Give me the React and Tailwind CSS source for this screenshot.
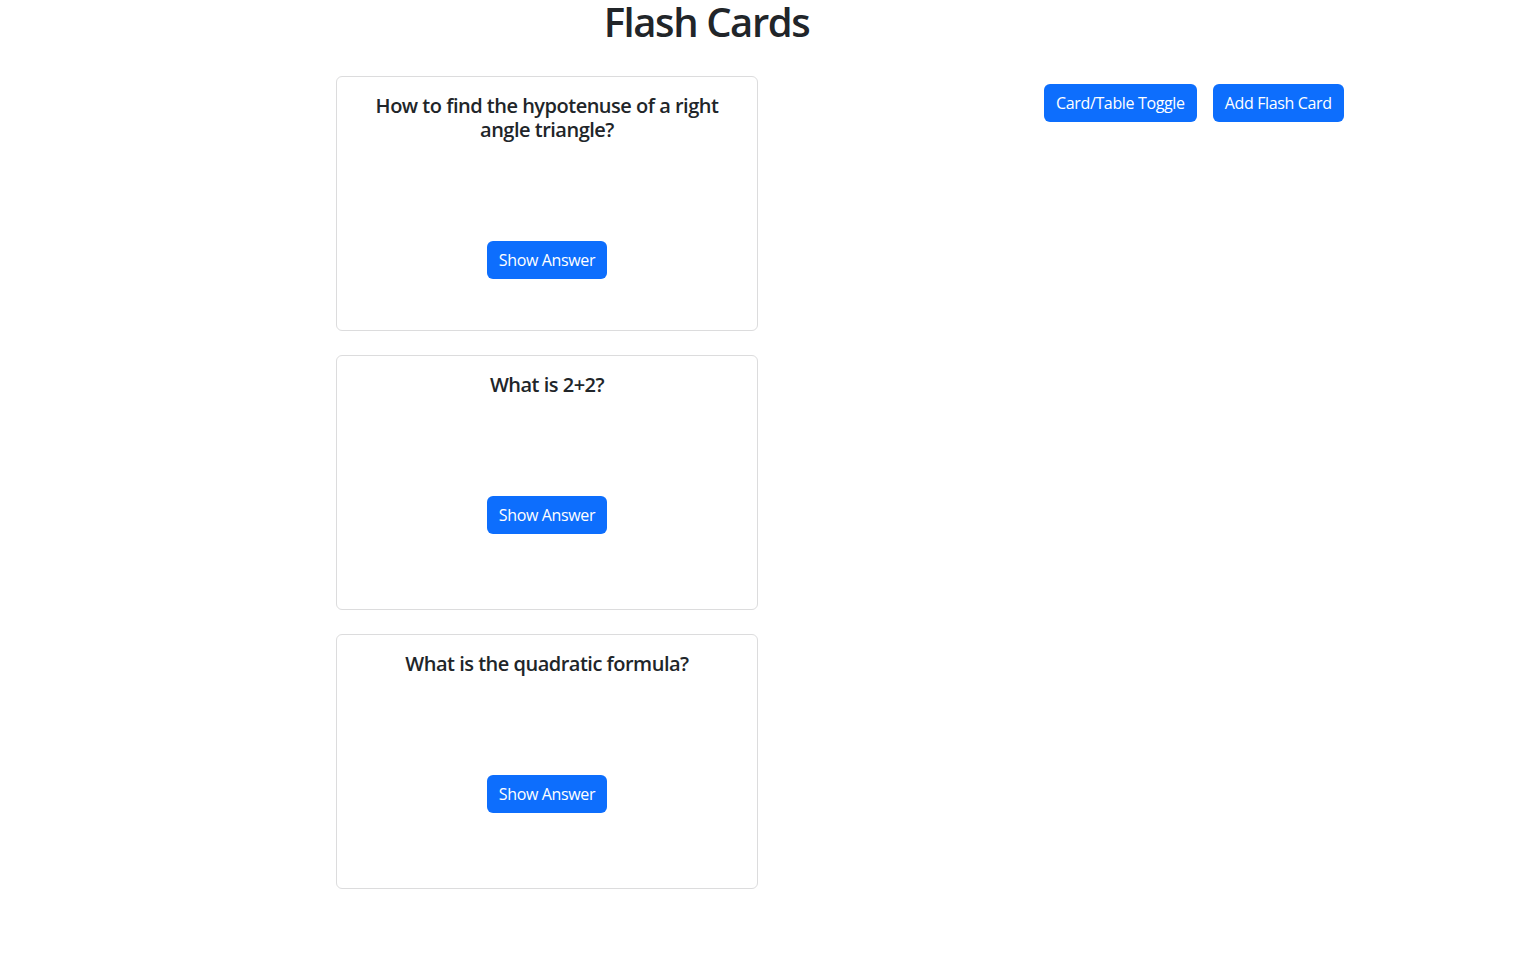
import React from "react";

const questions = [
  "How to find the hypotenuse of a right angle triangle?",
  "What is 2+2?",
  "What is the quadratic formula?",
];

function Card({ q }) {
  return (
    <div className="h-[255px] w-[422px] rounded-[6px] border border-[#dcdcdd] bg-white px-4 pt-[17px] text-center">
      <h5 className="text-[20px] leading-[24px] font-semibold tracking-[-0.025em] text-[#212529]">{q}</h5>
      <button className="mt-[99px] h-[38px] rounded-[6px] bg-[#0d6efd] px-3 text-[16px] tracking-[-0.022em] text-white">
        Show Answer
      </button>
    </div>
  );
}

export default function App() {
  return (
    <div
      className="min-h-[957px] bg-white text-[#212529]"
      style={{ fontFamily: '"Open Sans", "Noto Sans", sans-serif' }}
    >
      <h1 className="ml-[114px] w-[1185px] pt-[1px] text-center text-[40px] leading-[42px] font-semibold tracking-[-0.035em]">
        Flash Cards
      </h1>
      <div className="mt-[33px] ml-[336px] flex items-start">
        <div className="flex w-[422px] flex-col gap-[24px]">
          {questions.map((q) => (
            <Card key={q} q={q} />
          ))}
        </div>
        <div className="ml-[286px] mt-[8px] flex gap-4">
          <button className="h-[38px] rounded-[6px] bg-[#0d6efd] px-3 text-[16px] tracking-[-0.022em] text-white">
            Card/Table Toggle
          </button>
          <button className="h-[38px] rounded-[6px] bg-[#0d6efd] px-3 text-[16px] tracking-[-0.022em] text-white">
            Add Flash Card
          </button>
        </div>
      </div>
    </div>
  );
}
